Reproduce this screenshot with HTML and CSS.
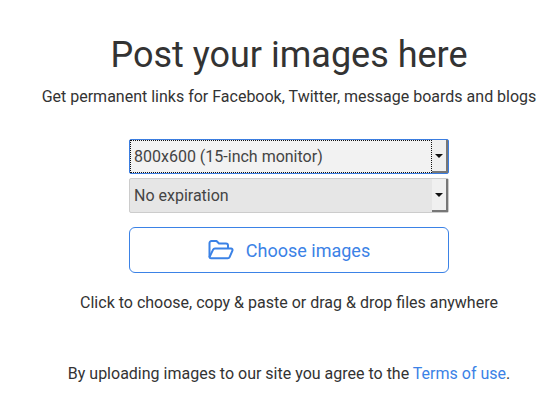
FILE: index.html
```html
<!DOCTYPE html>
<html lang="en">
<head>
  <meta charset="UTF-8" />
  <title>Post your images here</title>
  <link rel="stylesheet" href="styles.css">
</head>
<body>

<main class="upload">
  <h1>Post your images here</h1>
  <p class="lead">Get permanent links for Facebook, Twitter, message boards and blogs</p>

  <div class="options">
    <div class="select focused">
      <span class="select-label">800x600 (15-inch monitor)</span>
      <span class="select-btn"><i class="arrow"></i></span>
    </div>
    <div class="select">
      <span class="select-label">No expiration</span>
      <span class="select-btn"><i class="arrow"></i></span>
    </div>
  </div>

  <button class="choose">
    <svg width="26" height="20" viewBox="0 0 26 20" fill="none" stroke="#3b82e6" stroke-width="2" stroke-linejoin="round" stroke-linecap="round">
      <path d="M1.5 16.5V3a2 2 0 0 1 2-2h5l2.5 2.5h7a2 2 0 0 1 2 2V8"/>
      <path d="M1.5 17l3.6-7.4A2 2 0 0 1 6.900 8.500H23a1.500 1.500 0 0 1 1.400 2.100l-2.800 6.500a2 2 0 0 1-1.800 1.200H3a1.500 1.500 0 0 1-1.500-1.300z"/>
    </svg>
    <span>Choose images</span>
  </button>

  <p class="hint">Click to choose, copy &amp; paste or drag &amp; drop files anywhere</p>
  <p class="terms">By uploading images to our site you agree to the <a href="#">Terms of use</a>.</p>
</main>

</body>
</html>
```

FILE: styles.css
```css
html, body {
  margin: 0;
  height: 406px;
  overflow: hidden;
  background: #fff;
}

body {
  font-family: Roboto, Arial, sans-serif;
  color: #333;
}

.upload {
  width: 578px;
  display: flex;
  flex-direction: column;
  align-items: center;
  text-align: center;
}

h1 {
  font-size: 36px;
  font-weight: 400;
  line-height: 44px;
  margin: 33px 0 0;
  white-space: nowrap;
}

.lead {
  font-size: 16px;
  line-height: 20px;
  margin: 10px 0 0;
  white-space: nowrap;
}

.options {
  margin-top: 32px;
  display: flex;
  flex-direction: column;
  gap: 4px;
}

.select {
  width: 320px;
  height: 35px;
  box-sizing: border-box;
  display: flex;
  background: #e6e6e6;
  border: 1px solid #ccc;
  border-radius: 2px;
  text-align: left;
  font-size: 16px;
  color: #444;
}

.select.focused {
  background: #f2f2f2;
  border-color: #3b7de0;
}

.select-label {
  flex: 1;
  padding-left: 4px;
  line-height: 33px;
}

.focused .select-label {
  outline: 1px dotted #111;
  outline-offset: -1px;
}

.select-btn {
  width: 14px;
  display: flex;
  align-items: center;
  justify-content: center;
  background: #f0f0f0;
  border-right: 2px solid #777;
  border-bottom: 2px solid #777;
}

.arrow {
  width: 0;
  height: 0;
  border-left: 4px solid transparent;
  border-right: 4px solid transparent;
  border-top: 4px solid #111;
}

.choose {
  margin-top: 14px;
  width: 320px;
  height: 46px;
  display: flex;
  align-items: center;
  justify-content: center;
  gap: 12px;
  background: #fff;
  border: 1px solid #3b82e6;
  border-radius: 6px;
  color: #3b82e6;
  font-family: inherit;
  font-size: 18px;
}

.hint {
  font-size: 16px;
  line-height: 20px;
  margin: 20px 0 0;
  white-space: nowrap;
}

.terms {
  font-size: 16px;
  line-height: 20px;
  margin: 51px 0 0;
  white-space: nowrap;
}

.terms a {
  color: #3b82e6;
  text-decoration: none;
}
```
